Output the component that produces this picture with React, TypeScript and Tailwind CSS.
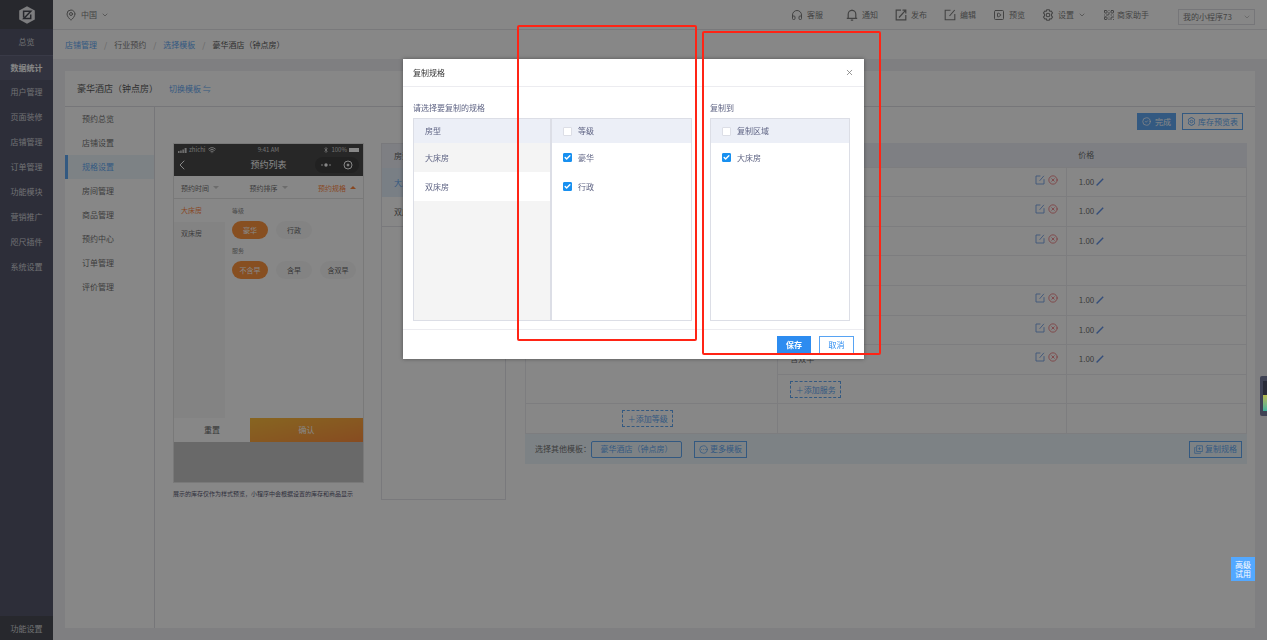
import React from 'react';
import {
  Bluetooth,
  Check,
  ChevronDown,
  ChevronLeft,
  CircleCheck,
  CircleEllipsis,
  CircleX,
  Headphones,
  MapPin,
  QrCode,
  SquarePlay,
  Wifi,
  X,
} from 'lucide-react';

interface NavItem {
  label: string;
  icon: React.ReactNode;
  arrow?: boolean;
}

interface SpecRow {
  level: boolean;
  service: string | null;
}

const mainMenu = ['数据统计', '用户管理', '页面装修', '店铺管理', '订单管理', '功能模块', '营销推广', '咫尺插件', '系统设置'];

const subMenu = ['预约总览', '店铺设置', '规格设置', '房间管理', '商品管理', '预约中心', '订单管理', '评价管理'];

const specRows: SpecRow[] = [
  { level: true, service: '不含早' },
  { level: false, service: '含早' },
  { level: false, service: '含双早' },
  { level: false, service: null },
  { level: true, service: '不含早' },
  { level: false, service: '含早' },
  { level: false, service: '含双早' },
  { level: false, service: null },
];

const BellIcon = () => (
  <svg viewBox="0 0 12 12" className="size-3" fill="none" stroke="currentColor" strokeWidth="1.2">
    <path d="M2.200 9.200V5.200a3.800 3.800 0 0 1 7.600 0v4M.8 9.400h10.400M4.800 11.200h2.400M6 .4v1" />
  </svg>
);

const ShareIcon = () => (
  <svg viewBox="0 0 12 12" className="size-3" fill="none" stroke="currentColor" strokeWidth="1.2">
    <path d="M6 1.200H1.200v9.600h9.600V6M4 8.500l6.500-7.100M7.500 1.200h3.300v3.300" />
  </svg>
);

const EditIcon = ({ className }: { className: string }) => (
  <svg viewBox="0 0 12 12" className={className} fill="none" stroke="currentColor" strokeWidth="1.1">
    <path d="M6.500 1.200H1.200v9.600h9.600V5M5.500 7l5.200-6" />
  </svg>
);

const PencilIcon = () => (
  <svg viewBox="0 0 8 8" className="size-2" fill="none" stroke="#2d6fe0" strokeWidth="1.4">
    <path d="M.6 7.400 7.200.8" />
  </svg>
);

const HexIcon = ({ className }: { className: string }) => (
  <svg viewBox="0 0 12 12" className={className} fill="none" stroke="currentColor" strokeWidth="1.1">
    <path d="M4.800.8h2.400l.5 1.400 1.500-.2 1.300 2-1 1.200v1.600l1 1.200-1.300 2-1.500-.2-.5 1.400H4.800l-.5-1.400-1.500.2-1.300-2 1-1.200V5.200l-1-1.200 1.300-2 1.500.2z" />
    <circle cx="6" cy="6" r="1.800" />
  </svg>
);

const CopyIcon = () => (
  <svg viewBox="0 0 12 12" className="size-[9px]" fill="none" stroke="currentColor" strokeWidth="1">
    <path d="M3.500 1h7.700v7.700H3.500zM7.300 3v3.700M5.500 4.900h3.700M2 3.300H.9v7.800h7.800V10" />
  </svg>
);

const navItems: NavItem[] = [
  { label: '通知', icon: <BellIcon /> },
  { label: '发布', icon: <ShareIcon /> },
  { label: '编辑', icon: <EditIcon className="size-3" /> },
  { label: '预览', icon: <SquarePlay className="size-3" /> },
  { label: '设置', icon: <HexIcon className="size-3" />, arrow: true },
];

const Logo = () => (
  <svg viewBox="0 0 18 20" className="h-5 w-[18px]">
    <path d="M9 1.200l7.800 4.300v9L9 18.800l-7.800-4.300v-9z" fill="#e6e6ea" />
    <path d="M5.600 12.500V6.300h7.200L5.800 13.600h6.900V9.500" fill="none" stroke="#10131f" strokeWidth="1.500" />
  </svg>
);

const Sidebar = () => (
  <aside className="flex w-[53px] shrink-0 flex-col bg-[#1e213e] text-[#c6c7cd]">
    <div className="flex h-[29px] items-center justify-center bg-[#10131f]">
      <Logo />
    </div>
    <nav className="flex flex-col text-center">
      <a href="#" className="mb-px h-[25px] leading-[26px]">总览</a>
      {mainMenu.map((item, index) => (
        <a
          key={item}
          href="#"
          className={index === 0 ? 'h-[25px] border-t border-[#3c4060] bg-[#2c2f4c] leading-6 font-bold text-white' : 'h-[25px] leading-6'}
        >
          {item}
        </a>
      ))}
    </nav>
    <a href="#" className="mt-auto h-6 bg-[#10131f] text-center leading-[26px]">功能设置</a>
  </aside>
);

const TopBar = () => (
  <header className="flex h-[30px] items-center border-b border-[#dcdce2] bg-white px-3 text-[#555]">
    <button className="flex items-center gap-1">
      <MapPin className="size-3" />
      中国
      <ChevronDown className="size-2" />
    </button>
    <div className="ml-auto flex items-center gap-[17px]">
      <button className="mr-[6px] flex items-center gap-1">
        <Headphones className="size-3" />
        客服
      </button>
      {navItems.map((item) => (
        <button key={item.label} className="flex items-center gap-1">
          {item.icon}
          {item.label}
          {item.arrow && <ChevronDown className="size-2" />}
        </button>
      ))}
      <button className="mr-3 flex items-center gap-[2px]">
        <QrCode className="size-3" />
        商家助手
      </button>
      <div className="mt-1 grid items-center">
        <select aria-label="小程序" className="col-start-1 row-start-1 h-4 w-[77px] appearance-none border border-[#d5d5dc] pl-1">
          <option>我的小程序73</option>
        </select>
        <ChevronDown className="col-start-1 row-start-1 mr-1 size-2 justify-self-end text-[#999]" />
      </div>
    </div>
  </header>
);

const Breadcrumb = () => (
  <nav className="flex h-[29px] items-center gap-[7px] bg-white pl-3 text-[#555]">
    <a href="#" className="text-[#2d8cf0]">店铺管理</a>
    <span className="text-[#aaa]">/</span>
    <span>行业预约</span>
    <span className="text-[#aaa]">/</span>
    <a href="#" className="text-[#2d8cf0]">选择模板</a>
    <span className="text-[#aaa]">/</span>
    <span className="text-[#222]">豪华酒店（钟点房）</span>
  </nav>
);

const Chip = ({ children, active }: { children: string; active?: boolean }) => (
  <span
    className={
      active
        ? 'h-[18px] w-9 rounded-full bg-[#ff7300] text-center leading-[18px] text-white'
        : 'h-[18px] w-9 rounded-full bg-[#f6f6f6] text-center leading-[18px] text-[#333]'
    }
  >
    {children}
  </span>
);

const PhonePreview = () => (
  <div className="w-[191px] shrink-0">
    <div className="border border-[#dcdcdc] text-[7px]">
      <div className="h-8 bg-[#101010] px-1 text-white">
        <div className="grid h-[11px] grid-cols-3 items-center text-[6px] text-[#ccc]">
          <span className="flex items-center gap-[2px]">
            <svg viewBox="0 0 9 5" className="h-[5px] w-[9px]" fill="currentColor">
              <path d="M0 3h1.500v2H0zM2.200 2.500h1.500V5H2.200zM4.400 1.500h1.500V5H4.400zM6.600 0h2v5h-2z" />
            </svg>
            zhichi
            <Wifi className="size-2" strokeWidth={3} />
          </span>
          <span className="text-center">9:41 AM</span>
          <span className="flex items-center justify-end gap-[2px]">
            <Bluetooth className="size-[6px]" strokeWidth={3} />
            100%
            <span className="h-1 w-[10px] bg-white" />
          </span>
        </div>
        <div className="grid h-5 grid-cols-3 items-center">
          <ChevronLeft className="-ml-1 size-4" strokeWidth={1.5} />
          <span className="text-center text-[9px]">预约列表</span>
          <span className="flex h-4 w-11 items-center justify-around justify-self-end rounded-full bg-black">
            <svg viewBox="0 0 10 4" className="h-1 w-[10px]" fill="currentColor">
              <circle cx="1" cy="2" r=".8" />
              <circle cx="5" cy="2" r="1.700" />
              <circle cx="9" cy="2" r=".8" />
            </svg>
            <svg viewBox="0 0 10 10" className="size-[10px]" fill="none" stroke="currentColor">
              <circle cx="5" cy="5" r="4" />
              <circle cx="5" cy="5" r="1" fill="currentColor" />
            </svg>
          </span>
        </div>
      </div>
      <div className="flex h-[23px] items-center justify-between border-b border-[#ddd] px-[7px] pt-px text-[#444]">
        <span className="flex items-center gap-1">预约时间<i className="border-x-3 border-t-3 border-x-transparent border-t-[#bbb]" /></span>
        <span className="flex items-center gap-1">预约排序<i className="border-x-3 border-t-3 border-x-transparent border-t-[#bbb]" /></span>
        <span className="flex items-center gap-1 text-[#ff6000]">预约规格<i className="border-x-3 border-b-3 border-x-transparent border-b-[#ff6000]" /></span>
      </div>
      <div className="flex h-[219px]">
        <div className="w-[51px] bg-[#f4f4f4] leading-[23px] text-[#444]">
          <div className="bg-white pl-[7px] text-[#ff6000]">大床房</div>
          <div className="pl-[7px]">双床房</div>
        </div>
        <div className="pt-2 pl-[7px]">
          <div className="text-[6px] leading-2 text-[#666]">等级</div>
          <div className="mt-1 mb-2 flex gap-2 pt-[2px]">
            <Chip active>豪华</Chip>
            <Chip>行政</Chip>
          </div>
          <div className="text-[6px] leading-2 text-[#666]">服务</div>
          <div className="mt-1 flex gap-2 pt-[2px]">
            <Chip active>不含早</Chip>
            <Chip>含早</Chip>
            <Chip>含双早</Chip>
          </div>
        </div>
      </div>
      <div className="flex h-6 text-[8px]">
        <button className="w-[76px] text-[#333]">重置</button>
        <button className="flex-1 bg-gradient-to-br from-[#ffaa00] to-[#ff6a00] text-white">确认</button>
      </div>
      <div className="h-10 bg-[#b4b4b4]" />
    </div>
    <p className="mt-[7px] text-[6px] leading-2 whitespace-nowrap text-[#222244]">展示的库存仅作为样式预览，小程序中会根据设置的库存和商品显示</p>
  </div>
);

const RoomPanel = () => (
  <div className="h-[357px] w-[125px] shrink-0 border border-[#dcdce4] text-[#333]">
    <div className="h-6 bg-[#e8ebf5] pl-3 leading-6">房型</div>
    <div className="h-[29px] bg-[#dcebfb] pl-3 leading-[29px] text-[#2d8cf0]">大床房</div>
    <div className="h-[30px] border-b border-[#dcdce4] pl-3 leading-[29px]">双床房</div>
  </div>
);

const SpecTable = () => (
  <div className="min-w-0 flex-1">
    <table className="h-[291px] w-full table-fixed border-collapse text-left text-[#444]">
      <thead>
        <tr className="h-6 bg-[#e8ebf5]">
          <th className="w-[35%] pl-3 font-normal">等级</th>
          <th className="w-[40%] pl-3 font-normal">服务</th>
          <th className="pl-3 font-normal">价格</th>
        </tr>
      </thead>
      <tbody>
        {specRows.map((row, index) => (
          <tr key={index} className="h-[29px]">
            {row.level && <td rowSpan={4} className="border border-[#e6e6ec]" />}
            <td className="border border-[#e6e6ec] pr-2 pl-3">
              {row.service ? (
                <div className="flex items-center">
                  {row.service}
                  <span className="mb-1 ml-auto flex items-center gap-[3px]">
                    <button aria-label="编辑" className="text-[#4a86e0]"><EditIcon className="size-[10px]" /></button>
                    <button aria-label="删除" className="text-[#e84a50]"><CircleX className="size-[10px]" /></button>
                  </span>
                </div>
              ) : (
                <button className="block h-[17px] w-[51px] border border-dashed border-[#2d8cf0] leading-[15px] text-[#2d8cf0]">＋添加服务</button>
              )}
            </td>
            <td className="border border-[#e6e6ec] pl-3">
              {row.service && (
                <span className="flex items-center gap-[2px]">
                  1.00
                  <PencilIcon />
                </span>
              )}
            </td>
          </tr>
        ))}
        <tr className="h-[29px]">
          <td className="border border-[#e6e6ec] pr-2 text-center">
            <button className="h-[17px] w-[51px] border border-dashed border-[#2d8cf0] leading-[15px] text-[#2d8cf0]">＋添加等级</button>
          </td>
          <td className="border border-[#e6e6ec]" />
          <td className="border border-[#e6e6ec]" />
        </tr>
      </tbody>
    </table>
    <div className="flex h-[30px] items-center bg-[#e6f3fb] pr-[5px] pl-[10px] text-[#444]">
      选择其他模板：
      <button className="h-[17px] w-[91px] rounded-xs border border-[#2d8cf0] text-[#2d8cf0]">豪华酒店（钟点房）</button>
      <button className="ml-3 flex h-[17px] w-[53px] items-center justify-center gap-[2px] border border-[#2d8cf0] text-[#2d8cf0]">
        <CircleEllipsis className="size-[9px]" />
        更多模板
      </button>
      <button className="ml-auto flex h-[17px] w-[53px] items-center justify-center gap-[2px] border border-[#2d8cf0] text-[#2d8cf0]">
        <CopyIcon />
        复制规格
      </button>
    </div>
  </div>
);

const Tick = ({ id, label, checked, row }: { id: string; label: string; checked?: boolean; row?: boolean }) => (
  <label htmlFor={id} className={row ? 'flex h-[29px] items-center gap-[6px] pl-[11px]' : 'flex h-6 items-center gap-[6px] bg-[#eceff7] pl-[11px]'}>
    <span className="grid size-[9px] place-items-center">
      <input
        id={id}
        type="checkbox"
        defaultChecked={checked}
        className="peer col-start-1 row-start-1 size-[9px] appearance-none rounded-[1px] border border-[#dcdee6] bg-white checked:border-[#1890f0] checked:bg-[#1890f0]"
      />
      <Check className="pointer-events-none invisible col-start-1 row-start-1 size-[7px] text-white peer-checked:visible" strokeWidth={5} />
    </span>
    {label}
  </label>
);

const CopyDialog = () => (
  <div role="dialog" aria-label="复制规格" className="relative h-[300px] w-[461px] bg-white text-[#5f6484] shadow-[0_0_4px_rgba(0,0,0,0.4)]">
    <div className="flex h-7 items-center justify-between border-b border-[#ececf0] px-[10px] text-[#333]">
      <h2>复制规格</h2>
      <button aria-label="关闭" className="text-[#777]"><X className="size-[9px]" /></button>
    </div>
    <div className="flex h-[243px] gap-[18px] border-b border-[#ececf0] pt-4 pl-[10px]">
      <section>
        <h3 className="h-[15px] leading-[10px]">请选择要复制的规格</h3>
        <div className="flex h-[203px] w-[279px] border border-[#dcdee6]">
          <div className="flex w-[138px] flex-col border-r-2 border-[#dcdee6] bg-[#f4f4f4]">
            <div className="h-6 bg-[#eceff7] pl-[11px] leading-6">房型</div>
            <button className="h-[29px] pl-[11px] text-left">大床房</button>
            <button className="h-[29px] bg-white pl-[11px] text-left">双床房</button>
          </div>
          <div className="flex-1">
            <Tick id="level-all" label="等级" />
            <Tick id="level-luxury" label="豪华" checked row />
            <Tick id="level-business" label="行政" checked row />
          </div>
        </div>
      </section>
      <section>
        <h3 className="h-[15px] leading-[10px]">复制到</h3>
        <div className="h-[203px] w-[140px] border border-[#dcdee6]">
          <Tick id="area-all" label="复制区域" />
          <Tick id="area-big" label="大床房" checked row />
        </div>
      </section>
    </div>
    <div className="flex justify-end gap-2 pt-[6px] pr-[10px]">
      <button className="h-[18px] w-[34px] bg-[#2d8cf0] font-bold text-white">保存</button>
      <button className="h-[18px] w-[35px] border border-[#57a3f3] text-[#2d8cf0]">取消</button>
    </div>
    <div className="pointer-events-none absolute -top-[34px] left-[114px] h-[316px] w-[180px] rounded-xs border-2 border-[#ff2415]" />
    <div className="pointer-events-none absolute -top-7 left-[299px] h-[324px] w-[179px] rounded-xs border-2 border-[#ff2415]" />
  </div>
);

const App = () => {
  return (
    <div className="flex min-h-screen bg-[#ebebf0] font-['Noto_Sans_CJK_SC','Noto_Sans',sans-serif] text-[8px] leading-3">
      <Sidebar />
      <div className="flex min-w-0 flex-1 flex-col">
        <TopBar />
        <Breadcrumb />
        <main className="m-3 flex flex-1 flex-col bg-white">
          <div className="flex h-9 items-center gap-[11px] border-b border-[#d5d5dc] pl-3">
            <h1 className="text-[9px] text-[#222]">豪华酒店（钟点房）</h1>
            <a href="#" className="text-[#2d8cf0]">切换模板 ⇋</a>
          </div>
          <div className="flex flex-1">
            <nav className="flex w-[90px] shrink-0 flex-col border-r border-[#d5d5dc] text-[#444]">
              {subMenu.map((item) => (
                <a
                  key={item}
                  href="#"
                  className={
                    item === '规格设置'
                      ? 'h-6 border-l-3 border-[#2d8cf0] bg-[#e6f3fb] pl-[14px] leading-6 text-[#2d8cf0]'
                      : 'h-6 pl-[17px] leading-6'
                  }
                >
                  {item}
                </a>
              ))}
            </nav>
            <div className="min-w-0 flex-1 pr-2 pl-[18px]">
              <div className="flex h-9 items-start justify-end gap-[6px] pt-[6px] pr-1">
                <button className="flex h-[17px] w-[39px] items-center justify-center gap-1 bg-[#2d8cf0] text-white">
                  <CircleCheck className="size-[9px]" />
                  完成
                </button>
                <button className="flex h-[17px] w-[61px] items-center justify-center gap-[2px] border border-[#2d8cf0] text-[#2d8cf0]">
                  <HexIcon className="size-[9px]" />
                  库存预览表
                </button>
              </div>
              <div className="flex items-start">
                <PhonePreview />
                <div className="mr-[19px] ml-[17px]">
                  <RoomPanel />
                </div>
                <SpecTable />
              </div>
            </div>
          </div>
        </main>
      </div>

      <div className="fixed inset-0 flex items-start justify-center bg-[rgba(55,55,55,0.6)] pt-[59px]">
        <CopyDialog />
      </div>

      <div className="fixed top-[376px] right-0 flex h-10 w-[7px] flex-col rounded-l-xs bg-[#3f4254] pt-[5px] pl-[3px]">
        <span className="h-[14px] bg-[#292b38]" />
        <span className="h-4 bg-gradient-to-b from-[#b5b84c] to-[#38b09a]" />
      </div>
      <button className="fixed right-3 bottom-[59px] w-6 bg-[#53a8ff] py-[3px] leading-[9px] text-white">
        高级
        <br />
        试用
      </button>
    </div>
  );
};

export default App;
